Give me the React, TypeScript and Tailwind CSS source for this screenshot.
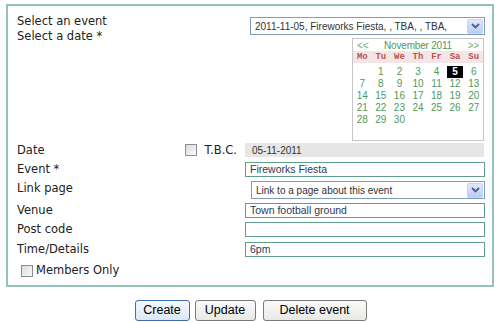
import React from "react";

const label = "font-['DejaVu_Sans',Verdana,sans-serif] text-[11.5px] leading-[15px] text-[#222]";
const field = "font-['Liberation_Sans',Arial,sans-serif] text-[10.5px] text-[#2b3a55] whitespace-nowrap";
const sel = "font-['Liberation_Sans',Arial,sans-serif] text-[10px] text-[#333] whitespace-nowrap";

function Arrow() {
  return (
    <div className="flex h-[15px] w-[16px] shrink-0 items-center justify-center rounded-[2px] border border-[#c3d3f5] bg-gradient-to-b from-[#dfe8fd] to-[#b9cdf6]">
      <svg width="9" height="6" viewBox="0 0 9 6">
        <path d="M1 1 L4.5 4.5 L8 1" stroke="#4d6185" strokeWidth="1.8" fill="none" />
      </svg>
    </div>
  );
}

function Check() {
  return (
    <div className="h-[12px] w-[12px] shrink-0 border border-[#8a8f94] bg-gradient-to-br from-[#dcdcdc] to-[#fafafa]" />
  );
}

function Input({ value }: { value?: string }) {
  return (
    <div className={`flex h-[15px] w-[240px] items-center overflow-hidden border border-[#5f9d8f] bg-white pl-[4px] ${field}`}>
      {value}
    </div>
  );
}

function Calendar() {
  const days = ["Mo", "Tu", "We", "Th", "Fr", "Sa", "Su"];
  const cells: (number | null)[] = [null, 1, 2, 3, 4, 5, 6];
  for (let d = 7; d <= 30; d++) cells.push(d);
  while (cells.length < 42) cells.push(null);
  return (
    <div className="ml-auto mr-[1px] h-[103px] w-[132px] border border-[#c6c6c6] bg-white">
      <div className="flex h-[12px] items-center justify-between px-[4px] font-['Liberation_Sans',Arial,sans-serif] text-[10px] tracking-[-0.2px]">
        <span className="text-[#7aa67a]">&lt;&lt;</span>
        <span className="text-[#4f9a5a]">November 2011</span>
        <span className="text-[#7aa67a]">&gt;&gt;</span>
      </div>
      <div className="grid h-[12px] grid-cols-7 bg-[#f4e6e6] font-['Liberation_Mono','Courier_New',monospace] text-[9px] font-bold leading-[12px] text-[#c05050]">
        {days.map((d) => (
          <div key={d} className="text-center">{d}</div>
        ))}
      </div>
      <div className="mt-[3px] grid grid-cols-7 font-['Liberation_Sans',Arial,sans-serif] text-[10px] leading-[12px] text-[#4f9a5a]">
        {cells.map((c, i) =>
          c === 5 ? (
            <div key={i} className="mx-[1px] h-[12px] bg-black text-center font-bold text-white">5</div>
          ) : (
            <div key={i} className="h-[12px] text-center">{c ?? ""}</div>
          )
        )}
      </div>
    </div>
  );
}

export default function App() {
  return (
    <div className="h-[322px] w-[501px] bg-white pl-[6px] pt-[4px]">
      <div className="h-[283px] w-[488px] border-2 border-[#93c3ba] pl-[9px]">
        {/* Row 1 */}
        <div className="flex">
          <div className={`w-[228px] pt-[8px] ${label}`}>
            <div>Select an event</div>
            <div>Select a date *</div>
          </div>
          <div className="w-[240px] pt-[11px]">
            <div className={`ml-[5px] flex h-[18px] items-center justify-between overflow-hidden border border-[#7f9db9] bg-white pl-[4px] pr-[1px] ${sel}`}>
              <span>2011-11-05, Fireworks Fiesta, , TBA, , TBA,</span>
              <Arrow />
            </div>
            <div className="mt-[3px]">
              <Calendar />
            </div>
          </div>
        </div>
        {/* Date */}
        <div className="mt-[2px] flex h-[14px] items-center">
          <div className={`flex w-[228px] items-center ${label}`}>
            <span>Date</span>
            <div className="ml-auto flex items-center gap-[7px] pr-[8px]">
              <Check />
              <span>T.B.C.</span>
            </div>
          </div>
          <div className={`flex h-[14px] w-[239px] items-center bg-[#e6e6e6] pl-[7px] ${sel}`}>
            05-11-2011
          </div>
        </div>
        {/* Event */}
        <div className="mt-[5px] flex items-center">
          <div className={`w-[228px] ${label}`}>Event *</div>
          <Input value="Fireworks Fiesta" />
        </div>
        {/* Link page */}
        <div className="mt-[4px] flex">
          <div className={`w-[228px] ${label}`}>Link page</div>
          <div className={`ml-[6px] flex h-[18px] w-[234px] items-center justify-between border border-[#7f9db9] bg-white pl-[4px] pr-[1px] ${sel}`}>
            <span>Link to a page about this event</span>
            <Arrow />
          </div>
        </div>
        {/* Venue */}
        <div className="mt-[4px] flex items-center">
          <div className={`w-[228px] ${label}`}>Venue</div>
          <Input value="Town football ground" />
        </div>
        {/* Post code */}
        <div className="mt-[4px] flex items-center">
          <div className={`w-[228px] ${label}`}>Post code</div>
          <Input />
        </div>
        {/* Time */}
        <div className="mt-[5px] flex items-center">
          <div className={`w-[228px] ${label}`}>Time/Details</div>
          <Input value="6pm" />
        </div>
        {/* Members */}
        <div className={`ml-[4px] mt-[6px] flex items-center gap-[3px] ${label}`}>
          <Check />
          <span>Members Only</span>
        </div>
      </div>
      <div className="mr-[6px] mt-[13px] flex justify-center gap-[5px] font-['Liberation_Sans',Arial,sans-serif] text-[12.5px] text-black">
        <button className="h-[21px] w-[55px] rounded-[3px] border border-[#3b70b5] bg-gradient-to-b from-[#f4f8fd] to-[#dde8f6]">Create</button>
        <button className="h-[21px] w-[61px] rounded-[3px] border border-[#7a7a7a] bg-gradient-to-b from-[#fafafa] to-[#e8e8e4]">Update</button>
        <button className="ml-[2px] h-[21px] w-[104px] rounded-[3px] border border-[#7a7a7a] bg-gradient-to-b from-[#fafafa] to-[#e8e8e4]">Delete event</button>
      </div>
    </div>
  );
}
